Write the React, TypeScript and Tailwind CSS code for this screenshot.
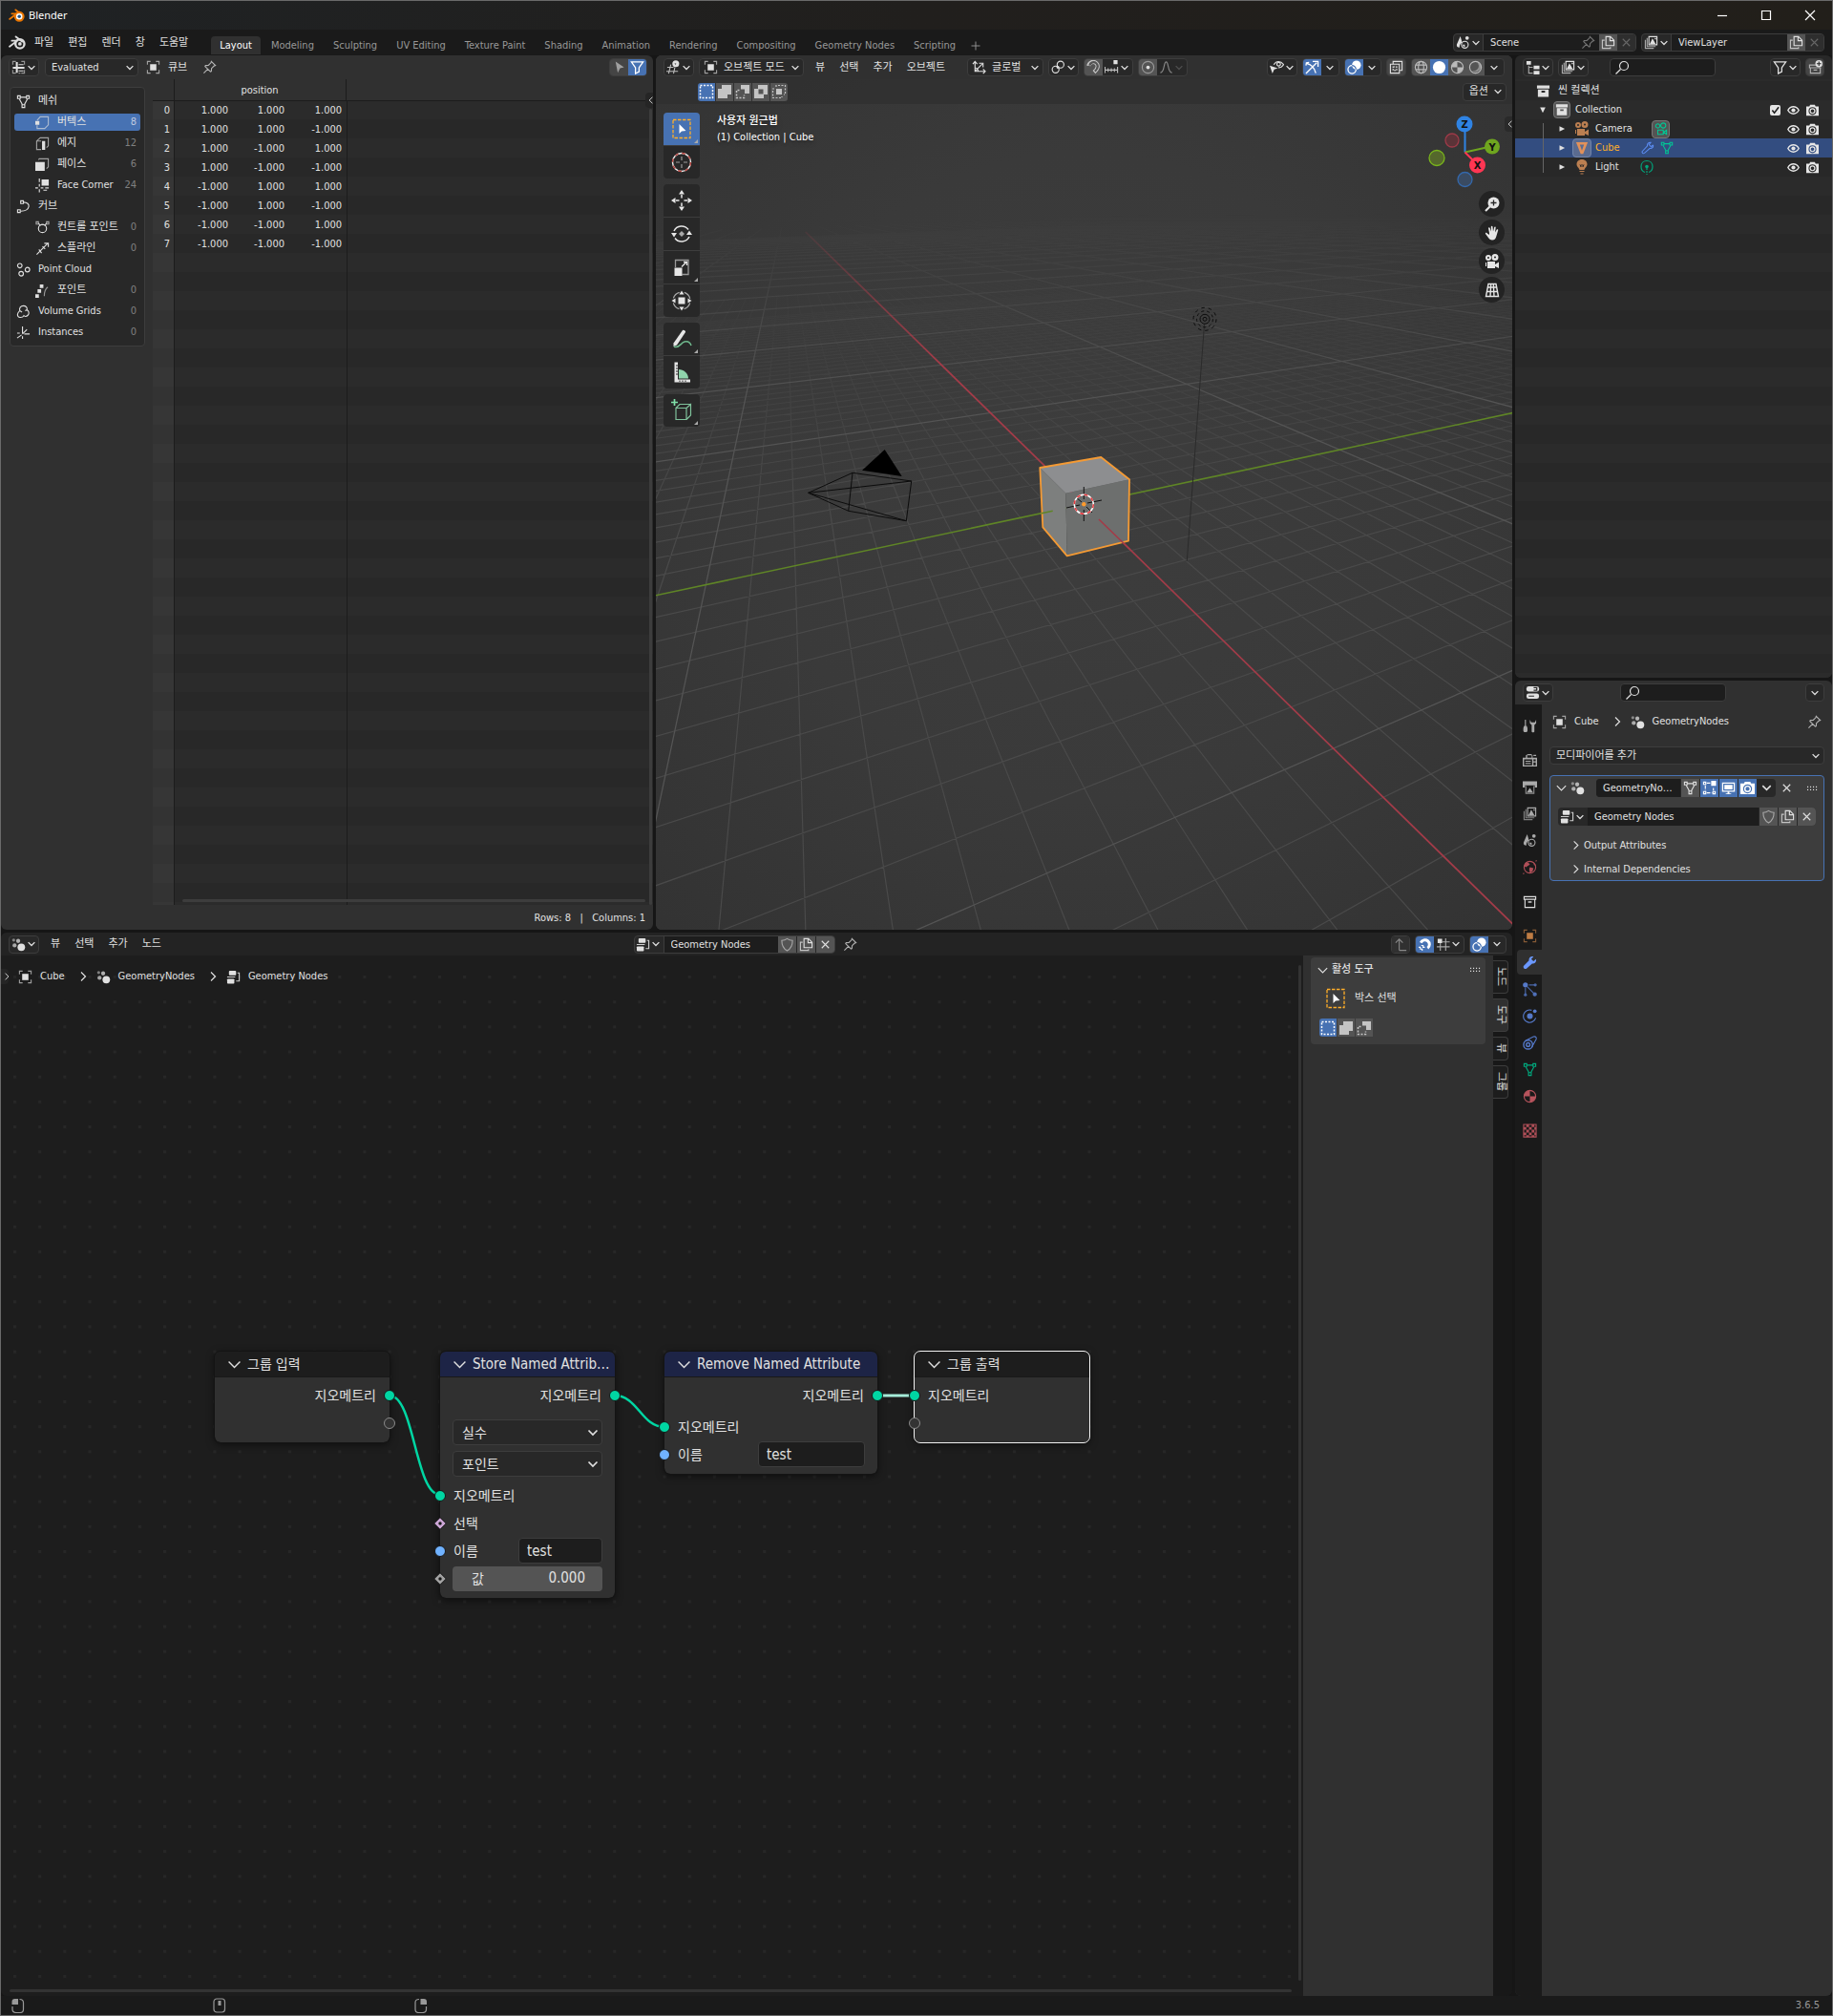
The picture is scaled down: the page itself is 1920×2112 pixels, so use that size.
import type { ReactNode } from "react";
import clsx from "clsx";

const S = { fill: "none", stroke: "currentColor", strokeWidth: 1.2 } as const;
const F = { fill: "currentColor", stroke: "none" } as const;

// All glyphs are drawn on a 16x16 grid
const ICONS: Record<string, ReactNode> = {
  down: <path {...S} strokeWidth={1.7} d="M3.500 5.500 8 10l4.500-4.500" />,
  downBig: <path {...S} d="M3 5.500 8 10.500l5-5" />,
  right: <path {...S} d="M6 3.500 10.500 8 6 12.500" />,
  left: <path {...S} d="M10 3.500 5.500 8l4.500 4.500" />,
  triDown: <path {...F} d="M3.500 4h9L8 13z" />,
  triRight: <path {...F} d="M4 3.500v9L13 8z" />,
  x: <path {...S} d="m4 4 8 8M12 4l-8 8" />,
  plus: <path {...S} d="M8 2v12M2 8h12" />,
  spreadsheet: (
    <>
      <path {...S} opacity={0.6} d="M1.500 5V1.500H5M11 1.500h3.500V5M14.500 11v3.500H11M5 14.500H1.500V11M8 14.500h2" />
      <path {...S} strokeWidth={2.2} d="M6 2v12M1.500 8.500h13" />
      <path {...S} d="M8 5h5.500M8 12h5.500" />
    </>
  ),
  object: (
    <>
      <path {...F} d="M4.500 4.500h7v7h-7z" />
      <path {...S} opacity={0.65} d="M1.500 5V1.500H5M11 1.500h3.500V5M14.500 11v3.500H11M5 14.500H1.500V11" />
    </>
  ),
  pin: <path {...S} opacity={0.75} d="M1.500 14.500 6 10M10 1.500 14.500 6l-1.500.5-2.800 2.800-.2 3.200-1 .5-6-6 .5-1 3.200-.2L9.500 3z" />,
  cursor: <path {...F} d="M4 1.500 13.500 8 9 9l-2.500 5z" />,
  filter: <path {...S} strokeWidth={1.4} d="M1.500 2h13L10 8.500V13l-4 2V8.500z" />,
  mesh: (
    <>
      <path {...S} d="M4.500 3h7M3.500 5l3.500 6.500M12.500 5 9 11.500" />
      <path {...S} d="M1.500 1.500h3v3h-3zM11.500 1.500h3v3h-3zM6.500 11.500h3v3h-3z" />
    </>
  ),
  vertex: (
    <>
      <path {...S} opacity={0.65} d="M2 5.500 5.500 1.500h9v9l-4 4H2V11" />
      <path {...F} d="M0 6h4.500v4.500H0z" />
    </>
  ),
  edge: (
    <>
      <path {...S} opacity={0.65} d="M6.500 14.500H1.500V5l4-3.500h9v9l-2 2M1.500 5h5" />
      <path {...F} d="M7.500 5h3.500v10H7.500z" />
    </>
  ),
  face: (
    <>
      <path {...F} d="M0 5h10.500v10H0z" />
      <path {...S} opacity={0.65} d="m3.500 2.500 1-1h10v9l-2 2" />
    </>
  ),
  corner: (
    <>
      <path {...F} d="M7 1h8v7H7z" />
      <path {...S} d="M4.500 0v4M4.500 6v3M4.500 12v3.500M0 10.500h3M6 10.500h3M11 10.500h4M9 13h4" />
    </>
  ),
  curve: (
    <>
      <path {...S} d="M8 3c9 0 8 10-3 10" />
      <path {...S} d="M5 1.500h3v3H5zM1.500 11.500h3v3h-3z" />
    </>
  ),
  ctrlPoint: (
    <>
      <circle {...S} cx={8} cy={9} r={4.5} />
      <path {...S} d="M3.500 3.500 6 5.500M12.500 3.500 10 5.500M6.500 4.500h3" />
      <path {...S} opacity={0.7} d="M1 1.500h2.500V4H1zM12.500 1.500H15V4h-2.500z" />
    </>
  ),
  spline: <path {...S} d="M1.500 14.500 14 2M10 2h4.500v4M4 9l3 4M8 5.500l3 3" />,
  pointCloud: (
    <>
      <circle {...S} cx={4} cy={3.5} r={2.5} />
      <circle {...S} cx={12.500} cy={8} r={2.5} />
      <circle {...S} cx={5.500} cy={12.5} r={2.5} />
    </>
  ),
  points: (
    <>
      <path {...F} d="M5 1h4v4H5zM2.500 6.500h4v4h-4zM0 12h4v4H0z" />
      <path {...S} opacity={0.6} d="M14 4c-3 2-4 5-4 10" />
    </>
  ),
  volume: <path {...S} d="M4 7c-1-3 1-5.500 4-5.500s4.500 2 4 4.500c2 1 3 4 1 6s-4 1-4.500.5C7 15 1 15.500 1.500 11c.2-2 1.500-3 2.500-4zM4 7l2.500 1.500M12 6l-2 1" />,
  instances: <path {...S} d="M7 1v8M9 9.500h6M6 10.500l-5 3.500M7 9.500l5-5M1 8.500h3M7 12v3" />,
  view3d: (
    <>
      <path {...S} opacity={0.8} d="M5 5 2.500 15M9.500 8 8 15M1 8h7M0 12.500h13" />
      <circle {...F} cx={10.500} cy={4} r={3.8} />
      <path fill="#282828" d="M9 3.500h2l-.8 2z" opacity={0.7} />
    </>
  ),
  axes: <path {...S} d="M3.500 2v10.500H15M1 4.500 3.500 1.500 6 4.500M12.500 10l2.500 2.500L12.500 15M3.500 12.500l8-8M8 3.500h4.500V8M7 12.500a4 4 0 0 0-3.500-4" />,
  pivot: (
    <>
      <circle {...S} cx={10.500} cy={5} r={3.8} />
      <circle {...S} cx={5} cy={10.500} r={3.8} />
      <circle {...F} cx={7.500} cy={8} r={1.5} />
    </>
  ),
  magnet: (
    <>
      <path {...S} strokeWidth={4.5} opacity={0.8} d="M2.500 6.500a5 5 0 0 1 8.500-3c2.500 2.500 2 6-2.500 10" />
      <path fill="none" stroke="#545454" strokeWidth={2.400} d="M3.500 6a4.500 4.500 0 0 1 7.500-2.500c2.500 2.500 2 5.500-1.500 9" />
    </>
  ),
  magnetFill: (
    <>
      <path {...S} strokeWidth={3.2} d="M3.500 6a5 5 0 1 1 7.500 6" />
      <path {...S} d="M1 11h2v2h2v2M4 9h2v2h2" />
    </>
  ),
  increment: (
    <>
      <path {...S} opacity={0.8} d="M.5 7.500v7M4 9v4M7.500 9v4M11 9v4M14.500 7.500v7M1 11h13" />
      <path {...F} d="M10 0h4.500v4.500H10z" />
    </>
  ),
  grid: (
    <>
      <path {...S} opacity={0.7} d="M5 6v9M11 1v14M7 5h8.500M1 10.500h14.500" />
      <path {...F} d="M2 1.500h5v5H2z" />
    </>
  ),
  proportional: (
    <>
      <circle {...S} opacity={0.5} cx={8} cy={8} r={6.5} />
      <circle {...F} cx={8} cy={8} r={2} />
    </>
  ),
  falloff: <path {...S} d="M1.500 14c5 0 3.500-12 6.500-12s1.500 12 6.500 12" />,
  visibility: (
    <>
      <path {...F} d="m0 6 9 3-4 1.500L3 15z" />
      <path {...S} d="M4.500 5C7.500.5 12 .5 15.500 5c-2 3-4 3.500-6 3.500" />
      <circle {...S} cx={10} cy={4.500} r={2} />
    </>
  ),
  gizmo: <path {...S} strokeWidth={1.4} d="M1 15 13 3M8.500 1.500h6v6M1.500 3.500c5 1 9 4.500 10.500 11M1 6l.5-3 3-.5" />,
  overlay: (
    <>
      <circle {...F} cx={10.500} cy={5.500} r={5} />
      <circle {...S} strokeWidth={1.4} cx={5.500} cy={10.500} r={4.5} />
      <path d="M5.500 6a4.500 4.500 0 0 1 4.500 4.500" fill="none" stroke="#4772b3" strokeWidth={1.3} />
    </>
  ),
  xray: (
    <>
      <path {...S} d="M4.500 4.500V1.500h10v10h-3M1.500 4.500h10v10h-10z" />
      <path {...S} strokeDasharray="2 1" d="M4.500 7.500h4v4h-4z" />
    </>
  ),
  wire: (
    <>
      <circle {...S} cx={8} cy={8} r={6.5} />
      <ellipse {...S} cx={8} cy={8} rx={3} ry={6.5} />
      <path {...S} d="M2 5.500h12M2 10.500h12" />
    </>
  ),
  solid: <circle {...F} cx={8} cy={8} r={7} />,
  material: (
    <>
      <circle {...S} cx={8} cy={8} r={6.5} />
      <path {...F} d="M8 1.500A6.500 6.500 0 0 0 1.500 8H8zM8 8v6.500A6.500 6.500 0 0 0 14.500 8z" />
    </>
  ),
  rendered: (
    <>
      <circle {...S} cx={8} cy={8} r={6.5} />
      <path {...F} opacity={0.6} d="M10 3c4 4 0 10-6 9 6 4 13-3 9-8z" />
    </>
  ),
  scene: (
    <>
      <path {...F} d="M5 1 1 10c-.5 2.500 1 3.500 3 3.500 0-3 1-4.500 3-5.500z" />
      <circle {...S} cx={10} cy={10.500} r={3.8} />
      <circle {...F} cx={12.500} cy={3} r={2} />
      <path {...F} d="M7.500 10.500a2.500 2.500 0 0 0 2.500 2.500v-2.500z" />
    </>
  ),
  viewLayer: (
    <>
      <path {...S} opacity={0.7} d="M1.500 5v9.500H11M3.500 3v9.500H13" />
      <path {...S} d="M5.500 1.500h9v9h-9z" />
      <path {...F} d="m6.500 9.500 3-6 3.500 6zM12 3h1.500v1.500H12z" />
    </>
  ),
  copy: (
    <>
      <path {...S} opacity={0.8} d="M4 5.500H1.500v9h9V13" />
      <path {...S} d="M5.500 1.500h5l4 4v6h-9zM10 2v4h4" />
    </>
  ),
  outliner: (
    <>
      <path {...F} d="M1 1h5v4H1zM9 6h6.500v4H9zM9 12h6.500v4H9z" />
      <path {...S} opacity={0.7} d="M3.500 6v8.500H8M4 8h4" />
    </>
  ),
  search: (
    <>
      <circle {...S} cx={10} cy={6} r={4.5} />
      <path {...S} d="m6.500 9.500-5 5" />
    </>
  ),
  collection: (
    <>
      <path {...F} d="M1 1.500h14v3.500H1z" />
      <path {...F} fillRule="evenodd" d="M2 6h12v8.500H2zm4 1.500v2h4v-2z" />
    </>
  ),
  collectionLine: (
    <>
      <path {...S} d="M1.500 2.500h13v3h-13zM2.500 5.500h11v9h-11z" />
      <path {...S} strokeWidth={1.5} d="M6 8.500h4" />
    </>
  ),
  newCollection: (
    <>
      <path {...S} opacity={0.7} d="M9 5.500H1.500v3h13M2.500 8.500v6h11v-6M6 11h4" />
      <circle {...F} cx={12} cy={4} r={4} />
      <path stroke="#282828" strokeWidth={1.2} d="M12 1.500v5M9.500 4h5" />
    </>
  ),
  camera: (
    <>
      <path {...F} fillRule="evenodd" d="M4 1a3 3 0 1 0 0 6 3 3 0 0 0 0-6m0 2a1 1 0 1 1 0 2 1 1 0 0 1 0-2M11 0a3.500 3.500 0 1 0 0 7 3.500 3.500 0 0 0 0-7m0 2.500a1 1 0 1 1 0 2 1 1 0 0 1 0-2" />
      <path {...F} d="M3 8h8v3l4-2.500v6.500l-4-2v2H3zM1 9h1v4H1z" />
    </>
  ),
  cameraLine: (
    <>
      <circle {...S} cx={4} cy={4.500} r={2.5} />
      <circle {...S} cx={10.500} cy={4} r={3} />
      <path {...S} d="M4 9.500h6.500v5H4zM11 12l3.500-2.500v5z" />
    </>
  ),
  meshFill: <path {...F} fillRule="evenodd" d="M1 1h14L9.500 15h-3zm4.500 3L8 11l2.500-7z" />,
  light: (
    <>
      <path {...F} fillRule="evenodd" d="M8 0C4.500 0 2.500 2.500 2.500 5c0 3 2.500 3.500 3 6h5c.5-2.500 3-3 3-6 0-2.500-2-5-5.500-5M5.500 5l1 3h1V6h1v2h1l1-3-1.500 1L8 5 7 6z" />
      <path {...S} d="M5.500 12.500h5M6.500 15h3" />
    </>
  ),
  lightData: (
    <>
      <path {...S} d="M6 13.500C3 12.500 2 10 2 7.500 2 4 4.500 1.500 8 1.500S14 4 14 7.500c0 2.500-1 5-4 6" />
      <circle {...F} cx={8} cy={7.500} r={1.8} />
      <path {...S} d="M8 9v7" strokeDasharray="2 1" />
    </>
  ),
  wrench: <path {...F} d="M14.800 4 12 6.500 9.500 4 12 1.200C9 .2 6.500 2.500 7 5.500L1.200 11.500c-1.500 2 1 4.500 3 3.200L10.500 9c3 .5 5.300-2 4.300-5" />,
  wrenchLine: <path {...S} d="M14.300 4.500 12 6.500 9.500 4l2-2.500C9 1 7 3 7.500 5.500L1.500 12c-1 1.500 1 3.200 2.500 2.200L10.500 8.500c2.500.5 4.500-1.500 3.800-4" />,
  eye: (
    <>
      <path {...S} strokeWidth={1.8} d="M1 8c3.500-6 10.500-6 14 0-3.500 6-10.500 6-14 0z" />
      <circle {...F} cx={8} cy={8} r={2.6} />
    </>
  ),
  photo: (
    <>
      <path {...F} fillRule="evenodd" d="M0 3h4l1-2h6l1 2h4v12H0zm8 1a5 5 0 1 0 0 10A5 5 0 0 0 8 4" />
      <circle {...S} strokeWidth={1.5} cx={8} cy={9} r={3} />
    </>
  ),
  properties: (
    <>
      <rect {...F} x={1} y={1} width={14} height={6} rx={2.5} />
      <rect {...F} x={1} y={9} width={14} height={6} rx={2.5} />
      <path fill="none" stroke="#282828" strokeWidth={1.3} d="M9 2.500h3.500v3H9M3.500 12h6" />
    </>
  ),
  geoNodes: (
    <>
      <circle {...F} cx={11} cy={11} r={4.2} />
      <circle {...F} opacity={0.75} cx={7.500} cy={4} r={2.3} />
      <circle {...F} opacity={0.7} cx={3.500} cy={9} r={2.3} />
      <circle {...F} opacity={0.5} cx={2.500} cy={3} r={1.7} />
    </>
  ),
  nodeTree: (
    <>
      <rect {...F} x={3} y={1} width={8} height={5} rx={1} />
      <rect {...F} x={1} y={10} width={8} height={5.5} rx={1} />
      <path {...S} opacity={0.9} d="M1 8h9M12.500 3.500h2v9H11" />
    </>
  ),
  shield: <path {...S} opacity={0.6} d="M8 1.500C6 3 4 3.500 2 3.500c0 5 1.500 9 6 11.500 4.500-2.500 6-6.500 6-11.500-2 0-4-.5-6-2z" />,
  editMode: (
    <>
      <path {...S} strokeDasharray="4 1.500" d="M3.500 5v6M5 13.500h6M12.500 8v3M5 2.500h4" />
      <path {...S} d="M1.500 1.500h2.500v2.500H1.500zM1.500 12h2.500v2.500H1.500zM12 12h2.500v2.500H12z" />
      <path {...F} d="M10 0h5.500v5.500H10z" />
    </>
  ),
  monitor: (
    <>
      <path {...S} strokeWidth={1.4} d="M1.500 2.500h13v9h-13z" />
      <path {...F} d="M3.500 4.500h9v5h-9zM7 12h2v2h2v1H5v-1h2z" />
    </>
  ),
  grip: <path {...F} d="M0 5h1.500v1.500H0zM4 5h1.500v1.500H4zM8 5h1.500v1.500H8zM12 5h1.500v1.500H12zM0 9h1.500v1.500H0zM4 9h1.500v1.500H4zM8 9h1.500v1.500H8zM12 9h1.500v1.500H12z" />,
  tool: (
    <>
      <path {...S} d="M3 1v8" />
      <path {...F} d="M1.500 8h3l.8 2.500v3L4.500 15h-3l-.8-1.500v-3zM8 1v4l2 2v7.500c0 1 3 1 3 0V7l2-2V1l-1.500 3h-4z" />
    </>
  ),
  render: (
    <>
      <path {...F} fillRule="evenodd" d="M0 5h3.500V2.500L6 1h3.500L11 2.500V5h5v10H0zm1.500 2v6.500h9V7zm10.500 0v2h2.500V7zm0 3.500v3h2.500v-3zM5 2.500V5h5V2.500z" />
      <path {...S} d="M3 9h6M3 11.500h6M12 2.500h3" />
    </>
  ),
  output: (
    <>
      <path {...F} d="M0 1.500h16v7h-2.500V6h-11v2.500H0z" />
      <path {...S} opacity={0.8} d="M3.500 7v8h9V7" />
      <path {...F} d="m4.500 14 3.500-5 3.500 5z" />
    </>
  ),
  world: (
    <>
      <circle {...S} cx={8} cy={8} r={6.5} />
      <path {...F} d="M3 3c3-1 4 1 5 1.500-1 2-3 1.500-4 3.500L1.500 7zM8 8l4 1-1 3.500-3 2C8 12 6.500 11 8 8zM12 2l3 4-2.500-.5zM13 1.500 15.500.5" />
      <path {...S} d="m1.500 14.500-1 1M14.500 1.500l1-1" />
    </>
  ),
  particles: (
    <>
      <circle {...F} cx={3} cy={3} r={2.8} />
      <path {...S} opacity={0.8} d="M3 6v7M7 3h6M5 5l7 7" />
      <circle {...F} opacity={0.8} cx={14} cy={3} r={1.7} />
      <circle {...F} opacity={0.8} cx={3} cy={14} r={1.7} />
      <circle {...F} opacity={0.9} cx={13.500} cy={13.500} r={2.3} />
    </>
  ),
  physics: (
    <>
      <circle {...F} cx={8} cy={8} r={3.2} />
      <path {...S} d="M10 1.500A7 7 0 1 0 14.500 10" />
      <circle {...F} cx={13.500} cy={2.500} r={2} />
    </>
  ),
  constraints: (
    <>
      <circle {...S} strokeWidth={1.5} cx={6} cy={10} r={5} />
      <circle {...S} strokeWidth={1.5} cx={6} cy={10} r={2} />
      <path {...S} d="M3 5.500 12 1c3-.5 3.500 1.500 3 3l-5 9" />
    </>
  ),
  texture: (
    <>
      <path {...S} d="M1 1h14v14H1z" />
      <path {...F} d="M4 1h3v3H4zM10 1h3v3h-3zM1 4h3v3H1zM7 4h3v3H7zM13 4h2v3h-2zM4 7h3v3H4zM10 7h3v3h-3zM1 10h3v3H1zM7 10h3v3H7zM13 10h2v3h-2zM4 13h3v2H4zM10 13h3v2h-3z" />
    </>
  ),
  up: <path {...S} opacity={0.5} d="M6 14.500h8M6 14.500v-12M2 6l4-4 4 4" />,
  boxSet: <path fill="none" stroke="#fff" strokeWidth={1.5} strokeDasharray="2 1.500" d="M1.500 1.500h13v13h-13z" />,
  boxAdd: <path {...F} d="M5 1h10v10h-4v4H1V5h4z" />,
  boxSub: (
    <>
      <path {...F} d="M6 1h9v9h-5V5.500H6z" />
      <path {...S} strokeWidth={1.5} strokeDasharray="2 1.500" d="M4.500 6.500h-3v8h8v-3" />
    </>
  ),
  boxXor: <path {...F} fillRule="evenodd" d="M5 1h10v10h-4v4H1V5h4zm.5 4.500v5h5v-5z" />,
  boxAnd: (
    <>
      <path {...F} d="M5 5h6v6H5z" />
      <path {...S} strokeDasharray="2 1.500" d="M5 3V1.500h9.500V11H13M3 5H1.500v9.500H11V13" />
    </>
  ),
  mouseL: (
    <>
      <path {...F} d="M1.500 7V4a3 3 0 0 1 3-3H8v6z" />
      <path {...S} d="M9.500 1.500c3 0 4 1 4 3.500v7c0 2-1.500 3.500-3.500 3.500H6c-2.500 0-4-1.500-4-3.500V9" />
    </>
  ),
  mouseM: (
    <>
      <rect {...S} x={2} y={1} width={11.5} height={14} rx={3} />
      <path {...F} d="M6.500 3h3v5h-3z" />
    </>
  ),
  mouseR: (
    <>
      <path {...F} d="M14 7V4a3 3 0 0 0-3-3H7.500v6z" />
      <path {...S} d="M6 1.500c-3 0-4 1-4 3.500v7c0 2 1.500 3.500 3.500 3.500h4c2.500 0 4-1.500 4-3.500V9" />
    </>
  ),
  zoom: (
    <>
      <circle {...F} cx={9.500} cy={6.500} r={6} />
      <path {...S} strokeWidth={2.2} d="m5.500 10.500-4.500 4.500" />
      <path stroke="#282828" strokeWidth={1.3} d="M9.500 3.500v6M6.500 6.500h6" />
    </>
  ),
  hand: <path {...F} d="M5 8 4 3c0-1 1.500-1 1.700 0L7 6.500 6.800 1.500c.2-1 1.700-1 1.700 0l.5 5 1.200-4.500c.3-1 1.600-.7 1.500.3L11 7.500l1.800-3c.6-.8 1.700-.2 1.400.8L12.500 11c-.7 3-2 4.500-4.500 4.500-2 0-3-1-4-2.500L1 9c-.4-1 .8-1.500 1.500-.8L5 10z" />,
  persp: <path {...S} strokeWidth={1.4} d="M4 1.500h8l2.500 13h-13zM3.300 5h9.400M2.500 9.500h11M6.700 1.500 6 14.500M9.300 1.500l.7 13" />,
  winMin: <path {...S} stroke="#fff" d="M3 8.500h10" />,
  winMax: <path {...S} stroke="#fff" d="M3.500 3.500h9v9h-9z" />,
  winClose: <path {...S} stroke="#fff" d="m3 3 10 10M13 3 3 13" />,
};

function Icon({ name, className = "size-4" }: { name: string; className?: string }) {
  return (
    <svg viewBox="0 0 16 16" aria-hidden="true" className={clsx("shrink-0", className)}>
      {ICONS[name]}
    </svg>
  );
}

function BlenderLogo({ mono = false, className }: { mono?: boolean; className: string }) {
  const main = mono ? "#dcdcdc" : "#ea7600";
  return (
    <svg viewBox="0 0 20 16" aria-hidden="true" className={clsx("shrink-0", className)}>
      <path d="M1 12.500 9.500 6H3.500M8 1.500 15 7" fill="none" stroke={main} strokeWidth={2} strokeLinecap="round" strokeLinejoin="round" />
      <circle cx={12.5} cy={9.5} r={5} fill={mono ? "none" : "#fff"} stroke={main} strokeWidth={2.5} />
      <circle cx={12.5} cy={9.5} r={2} fill={mono ? main : "#265787"} />
    </svg>
  );
}

/* ---------- shared controls ---------- */

const BOX = "flex h-[19px] items-center overflow-hidden rounded-[4px] border border-[#3d3d3d] bg-[#282828]";

function MenuButton({ icon, label }: { icon: string; label: string }) {
  return (
    <button aria-label={label} className={clsx(BOX, "w-8 justify-center")}>
      <Icon name={icon} className="size-[15px]" />
      <Icon name="down" className="size-3" />
    </button>
  );
}

function Cell({ icon, label, className }: { icon: string; label: string; className?: string }) {
  return (
    <button aria-label={label} className={clsx("flex h-full w-[19px] shrink-0 items-center justify-center", className)}>
      <Icon name={icon} className="size-[15px]" />
    </button>
  );
}

function Dropdown({ label, value, icon, className }: { label: string; value: string; icon?: string; className?: string }) {
  return (
    <div className={clsx(BOX, "pr-0.5", className)}>
      {icon && <Icon name={icon} className="mr-1 ml-1 size-[15px]" />}
      <select aria-label={label} className={clsx("min-w-0 flex-1 appearance-none bg-transparent outline-none", icon ? "pl-0.5" : "pl-1.5")}>
        <option>{value}</option>
      </select>
      <Icon name="down" className="size-3" />
    </div>
  );
}

function SearchBox({ label, className }: { label: string; className?: string }) {
  return (
    <label className={clsx("flex h-[19px] items-center gap-1 rounded-[4px] border border-[#3d3d3d] bg-[#1d1d1d] px-1", className)}>
      <Icon name="search" className="size-4" />
      <input type="search" aria-label={label} className="w-full min-w-0 bg-transparent outline-none" />
    </label>
  );
}

function Crumbs({ items }: { items: { icon: string; text: string }[] }) {
  return (
    <nav className="flex items-center">
      {items.map((it, i) => (
        <a key={it.text} href="#" className="flex items-center">
          {i > 0 && <Icon name="right" className="mr-1.5 ml-[11px] size-4" />}
          <Icon name={it.icon} className="mr-2 size-[15px]" />
          {it.text}
        </a>
      ))}
    </nav>
  );
}

/* ---------- top ---------- */

const WORKSPACES = ["Layout", "Modeling", "Sculpting", "UV Editing", "Texture Paint", "Shading", "Animation", "Rendering", "Compositing", "Geometry Nodes", "Scripting"];

function TitleBar() {
  return (
    <div className="flex h-[30px] shrink-0 items-center bg-linear-to-r from-[#1f2224] via-[#211f1d] to-[#221f1a] pl-2 text-white">
      <BlenderLogo className="h-[14px] w-[18px]" />
      <h1 className="ml-[3px] flex-1 font-['Noto_Sans','Liberation_Sans',sans-serif] text-[11px]">Blender</h1>
      {["winMin", "winMax", "winClose"].map((n) => (
        <button key={n} aria-label={n.slice(3)} className="flex h-full w-[46px] items-center justify-center">
          <Icon name={n} />
        </button>
      ))}
    </div>
  );
}

function DataBlock({ icon, name, pin }: { icon: string; name: string; pin?: boolean }) {
  return (
    <div className={clsx(BOX, "w-48")}>
      <button aria-label={`Browse ${name}`} className="flex h-full w-[30px] items-center justify-center">
        <Icon name={icon} className="size-[15px]" />
        <Icon name="down" className="size-3" />
      </button>
      <div className="flex h-full min-w-0 flex-1 items-center border-l border-[#3d3d3d] bg-[#1d1d1d] pr-1">
        <input aria-label={name} defaultValue={name} className="min-w-0 flex-1 bg-transparent pl-[7px] outline-none" />
        {pin && <Icon name="pin" className="size-[15px] opacity-60" />}
      </div>
      <Cell icon="copy" label="New" className="bg-[#545454]" />
      <Cell icon="x" label="Remove" className="bg-[#2e2e2e] text-[#666]" />
    </div>
  );
}

function TopBar() {
  return (
    <header className="flex h-[27px] shrink-0 items-center bg-[#1a1a1a]">
      <BlenderLogo mono className="ml-[8px] h-[15px] w-[19px]" />
      <nav className="ml-2 flex gap-[15px] pt-px">
        {["파일", "편집", "렌더", "창", "도움말"].map((m) => (
          <button key={m}>{m}</button>
        ))}
      </nav>
      <div className="ml-6 flex gap-0.5 self-end pb-px text-[#989898]">
        {WORKSPACES.map((w, i) => (
          <button key={w} className={clsx("h-[19px] rounded-t-[4px] px-[9px]", i === 0 && "bg-[#303030] text-white")}>
            {w}
          </button>
        ))}
        <button aria-label="Add workspace" className="px-1">
          <Icon name="plus" className="size-3" />
        </button>
      </div>
      <div className="mr-2 ml-auto flex gap-[5px]">
        <DataBlock icon="scene" name="Scene" pin />
        <DataBlock icon="viewLayer" name="ViewLayer" />
      </div>
    </header>
  );
}

/* ---------- spreadsheet ---------- */

const DOMAINS = [
  { icon: "mesh", text: "메쉬" },
  { icon: "vertex", text: "버텍스", count: 8, sub: true, active: true },
  { icon: "edge", text: "에지", count: 12, sub: true },
  { icon: "face", text: "페이스", count: 6, sub: true },
  { icon: "corner", text: "Face Corner", count: 24, sub: true },
  { icon: "curve", text: "커브" },
  { icon: "ctrlPoint", text: "컨트롤 포인트", count: 0, sub: true },
  { icon: "spline", text: "스플라인", count: 0, sub: true },
  { icon: "pointCloud", text: "Point Cloud" },
  { icon: "points", text: "포인트", count: 0, sub: true },
  { icon: "volume", text: "Volume Grids", count: 0 },
  { icon: "instances", text: "Instances", count: 0 },
];

const ROWS = [
  [1, 1, 1],
  [1, 1, -1],
  [1, -1, 1],
  [1, -1, -1],
  [-1, 1, 1],
  [-1, 1, -1],
  [-1, -1, 1],
  [-1, -1, -1],
];

function Spreadsheet() {
  return (
    <section aria-label="Spreadsheet" className="flex min-h-0 flex-col overflow-hidden rounded-md bg-[#303030]">
      <div className="flex h-[25px] shrink-0 items-center pr-[6px] pl-2">
        <MenuButton icon="spreadsheet" label="Editor type" />
        <Dropdown label="Evaluation state" value="Evaluated" className="ml-[6px] w-[98px]" />
        <Icon name="object" className="ml-2 size-[15px]" />
        <span className="ml-2">큐브</span>
        <Icon name="pin" className="ml-4 size-[15px]" />
        <div className="ml-auto flex h-[19px] overflow-hidden rounded-[4px] border border-[#3d3d3d]">
          <Cell icon="cursor" label="Selected only" className="bg-[#454545] text-[#a0a0a0]" />
          <Cell icon="filter" label="Filter" className="bg-[#4772b3] text-white" />
        </div>
      </div>
      <div className="flex min-h-0 flex-1">
        <div className="w-[159px] shrink-0 px-[9px] pt-2">
          <ul className="w-[142px] rounded-[4px] border border-[#3d3d3d] bg-[#282828] px-1 py-[3px]">
            {DOMAINS.map((d) => (
              <li key={d.text} className="py-0.5">
                <button
                  className={clsx(
                    "flex h-[18px] w-full items-center gap-2 rounded-[3px] pr-1",
                    d.sub ? "pl-[22px]" : "pl-0.5",
                    d.active && "bg-[#4772b3]",
                  )}
                >
                  <Icon name={d.icon} className="size-[15px]" />
                  <span className="whitespace-nowrap">{d.text}</span>
                  {d.count !== undefined && <span className={clsx("ml-auto", d.active ? "text-[#c0cbe0]" : "text-[#808080]")}>{d.count}</span>}
                </button>
              </li>
            ))}
          </ul>
        </div>
        <div className="relative flex min-w-0 flex-1 flex-col">
          <div className="relative min-h-0 flex-1 bg-[repeating-linear-gradient(#2b2b2b_0_20px,#282828_20px_40px)] bg-position-[0_22px]">
            <div className="h-full w-[204px] border-r border-[#1c1c1c]">
              <div className="h-full w-[23px] border-r border-[#1c1c1c] bg-white/5"></div>
            </div>
            <table className="absolute inset-x-0 top-0 w-full table-fixed border-collapse text-right">
              <colgroup>
                <col className="w-[22px]" />
                <col className="w-[61px]" />
                <col className="w-[59px]" />
                <col className="w-[60px]" />
                <col />
              </colgroup>
              <thead>
                <tr className="h-[22px] border-b border-[#1c1c1c] bg-[#303030]">
                  <th></th>
                  <th colSpan={3} className="border-x border-[#1c1c1c] pt-0.5 text-center font-normal">
                    position
                  </th>
                  <th></th>
                </tr>
              </thead>
              <tbody>
                {ROWS.map((r, i) => (
                  <tr key={i} className="h-5">
                    <td className="pr-1 leading-5">{i}</td>
                    {r.map((v, j) => (
                      <td key={j} className="pr-1 leading-5">
                        {v.toFixed(3)}
                      </td>
                    ))}
                    <td></td>
                  </tr>
                ))}
              </tbody>
            </table>
            <div className="absolute top-[31px] right-[1px] bottom-0 w-[3px] rounded bg-[#3d3d3d]"></div>
            <div className="absolute right-2 bottom-[3px] left-[31px] h-[3px] rounded bg-[#3d3d3d]"></div>
            <div className="absolute top-[14px] right-0 flex h-4 w-2 items-center rounded-l bg-[#252525]">
              <Icon name="left" className="size-3" />
            </div>
          </div>
          <p className="h-[26px] shrink-0 pr-2 text-right leading-[27px] whitespace-pre">Rows: 8   |   Columns: 1</p>
        </div>
      </div>
    </section>
  );
}

/* ---------- 3D viewport ---------- */

// Floor plane -> view plane
const project = (x: number, y: number) => {
  const w = 1 - 0.0455 * x + 0.01926 * y;
  return [1135.3 + (14.24 * x + 31.97 * y) / w, 528.3 + (13.94 * x - 6.81 * y) / w];
};

const segment = (a: number[], b: number[]) => `M${a[0].toFixed(1)} ${a[1].toFixed(1)}L${b[0].toFixed(1)} ${b[1].toFixed(1)}`;

const floorLines = (step: number, count: number, far: number) => {
  let d = "";
  for (let i = -count; i <= count; i++) {
    const k = i * step;
    if (k === 0 || (step === 1 && k % 10 === 0)) continue;
    const yMin = Math.max(-far, (0.0455 * k - 0.85) / 0.01926);
    if (yMin < far) d += segment(project(k, yMin), project(k, far));
    const xMax = Math.min(far, (0.85 + 0.01926 * k) / 0.0455);
    if (xMax > -far) d += segment(project(-far, k), project(xMax, k));
  }
  return d;
};

const FINE = floorLines(1, 45, 60);
const MAJOR = floorLines(10, 24, 400);
const X_AXIS = segment(project(-300, 0), project(18, 0));
const Y_AXIS = segment(project(0, -40), project(0, 60));

function Scene3D() {
  return (
    <svg viewBox="687 58 897 916" preserveAspectRatio="xMidYMid slice" aria-hidden="true" className="absolute inset-0 size-full">
      <defs>
        <radialGradient id="bg" cx="1135" cy="500" r="680" gradientUnits="userSpaceOnUse">
          <stop offset="0" stopColor="#3d3d3d" />
          <stop offset="0.5" stopColor="#3a3a3a" />
          <stop offset="1" stopColor="#323232" />
        </radialGradient>
        <linearGradient id="fadeFine" gradientUnits="userSpaceOnUse" x1="0" y1="255" x2="0" y2="540">
          <stop offset="0" stopColor="#000" />
          <stop offset="0.4" stopColor="#555" />
          <stop offset="1" stopColor="#fff" />
        </linearGradient>
        <linearGradient id="fadeMajor" gradientUnits="userSpaceOnUse" x1="0" y1="222" x2="0" y2="420">
          <stop offset="0" stopColor="#000" />
          <stop offset="0.3" stopColor="#404040" />
          <stop offset="1" stopColor="#fff" />
        </linearGradient>
        <linearGradient id="xAxis" gradientUnits="userSpaceOnUse" x1="0" y1="222" x2="0" y2="380">
          <stop offset="0" stopColor="#a33b48" stopOpacity="0" />
          <stop offset="1" stopColor="#a33b48" />
        </linearGradient>
        <mask id="mFine" maskUnits="userSpaceOnUse" x="687" y="58" width="897" height="916">
          <rect x="687" y="58" width="897" height="916" fill="url(#fadeFine)" />
        </mask>
        <mask id="mMajor" maskUnits="userSpaceOnUse" x="687" y="58" width="897" height="916">
          <rect x="687" y="58" width="897" height="916" fill="url(#fadeMajor)" />
        </mask>
      </defs>
      <rect x="0" y="0" width="2400" height="2400" fill="url(#bg)" />
      <path d={FINE} stroke="#4a4a4a" strokeWidth="1.2" mask="url(#mFine)" />
      <path d={MAJOR} stroke="#545454" strokeWidth="1.3" mask="url(#mMajor)" />
      <path d={X_AXIS} stroke="url(#xAxis)" strokeWidth="1.7" />
      <path d={Y_AXIS} stroke="#5f8526" strokeWidth="1.6" />

      {/* light */}
      <path d="M1261.500 340 1243.300 587.700" stroke="#2b2b2b" strokeWidth="1" />
      <g fill="none" stroke="#0c0c0c" strokeWidth="1">
        <circle cx="1262" cy="334.300" r="2" />
        <circle cx="1262" cy="334.300" r="5" />
        <circle cx="1262" cy="334.300" r="8.500" strokeDasharray="3 3" />
        <circle cx="1262" cy="334.300" r="12" strokeDasharray="3.500 4" />
      </g>

      {/* camera */}
      <path d="M926.700 471 903 492.700 944.700 499z" fill="#000" />
      <path
        d="M846.700 516.300 893 495.300 954.700 504 949.300 545.700 888.700 535.300zM846.700 516.300 954.700 504M846.700 516.300 949.300 545.700M893 495.300 888.700 535.300"
        fill="none"
        stroke="#0c0c0c"
        strokeWidth="1"
      />

      {/* cube */}
      <path d="M1089.300 490 1116.300 516.700 1117.700 582.300 1092.300 552.300z" fill="#7d7f7e" />
      <path d="M1116.300 516.700 1183 502.300 1182 566.700 1117.700 582.300z" fill="#6d6f6e" />
      <path d="M1089.300 490 1153.300 479 1183 502.300 1116.300 516.700z" fill="#8d8e90" />
      <path d="M1089.300 490 1153.300 479 1183 502.300 1182 566.700 1117.700 582.300 1092.300 552.300z" fill="none" stroke="#f49a34" strokeWidth="1.800" strokeLinejoin="round" />
      <path d="M1151 544 1184 576" stroke="#a33b48" strokeWidth="1.700" />
      <path d="M1091 537.700 1102.700 535.300" stroke="#5f8526" strokeWidth="1.600" />

      {/* 3D cursor */}
      <path d="M1135.300 510v13M1135.300 534v12M1117 532l14-3M1139 527l15-3M1127 521l6 5M1138 531l6 6" stroke="#111" strokeWidth="1" />
      <circle cx="1135.300" cy="528.300" r="10" fill="none" stroke="#fff" strokeWidth="1.500" />
      <circle cx="1135.300" cy="528.300" r="10" fill="none" stroke="#e8383d" strokeWidth="1.500" strokeDasharray="3.900 3.950" />
      <circle cx="1135.300" cy="528.300" r="2.200" fill="#ff9b2e" />
    </svg>
  );
}

const TOOL_ART: Record<string, ReactNode> = {
  select: (
    <>
      <path d="M3 2.500h18v19H3z" fill="none" stroke="#ffae29" strokeWidth="1.300" strokeDasharray="3.500 1.500" />
      <path d="M9.500 7v10l2.500-2.500 4.500-.5z" fill="#fff" />
    </>
  ),
  cursor: (
    <>
      <circle cx="12" cy="12" r="9.500" fill="none" stroke="#eee" strokeWidth="1.400" />
      <circle cx="12" cy="12" r="9.500" fill="none" stroke="#b8443f" strokeWidth="1.400" strokeDasharray="3.700 3.750" />
      <path d="M12 6v4M12 14v4M6 12h4M14 12h4" stroke="#999" strokeWidth="1.200" />
    </>
  ),
  move: (
    <>
      <path d="m12 1 3 4.500H9zM12 23l3-4.500H9zM1 12l4.500-3v6zM23 12l-4.500-3v6z" fill="#e6e6e6" />
      <path d="M12 6v3.500M12 14.500V18M6 12h3.500M14.500 12H18" stroke="#e6e6e6" strokeWidth="1.500" />
    </>
  ),
  rotate: (
    <>
      <path d="M4 9a8.800 8.800 0 0 1 15-1.500M20 15a8.800 8.800 0 0 1-15 1.500" fill="none" stroke="#e6e6e6" strokeWidth="1.500" />
      <path d="M1 11h6l-3 4.500zM23 13h-6l3-4.500z" fill="#e6e6e6" />
      <path d="m12 9 3 3-3 3-3-3z" fill="#a8a8a8" />
    </>
  ),
  scale: (
    <>
      <path d="M5.500 12V4.500H19v15h-6.500" fill="none" stroke="#999" strokeWidth="1.300" />
      <path d="M4.500 12.500h8V21h-8z" fill="#e6e6e6" />
      <path d="m12 11.500 5-5M14 6.500h3.500V10" fill="none" stroke="#e6e6e6" strokeWidth="1.300" />
    </>
  ),
  transform: (
    <>
      <circle cx="12" cy="12" r="9" fill="none" stroke="#aaa" strokeWidth="1.300" strokeDasharray="9 5.140" strokeDashoffset="-2.500" />
      <path d="M8.500 8.500h7v7h-7zM12 1.500l2.500 4h-5zM12 22.500l2.500-4h-5zM1.500 12l4-2.500v5zM22.500 12l-4-2.500v5z" fill="#e6e6e6" />
    </>
  ),
  annotate: (
    <>
      <path d="M3.500 16.500 13 3c1-1 3.500.5 3 2L7 18.500 3.500 20z" fill="#e6e6e6" />
      <path d="M4 20c5 3 7-4 11-5s6 1 7 4" fill="none" stroke="#6fb98d" strokeWidth="1.500" />
    </>
  ),
  measure: (
    <>
      <path d="M4.500 1.500h3.500v21H4.500zM4.500 19.500H21v3H4.500z" fill="#e6e6e6" />
      <path d="M9 9c5 0 10 4 10 9.500H9z" fill="#8fd3ab" />
      <path d="M8 5H6M8 8H6M8 11H6M8 14H6M10 22v-1.500M13 22v-1.500M16 22v-1.500" stroke="#282828" />
    </>
  ),
  addCube: (
    <>
      <path d="M6 9.500h11v12H6zM6 9.500l4-4h11.500M17 9.500l4.500-4V17l-4.500 4.500" fill="none" stroke="#7fc29b" strokeWidth="1.200" />
      <path d="M4.500 0v7M1 3.500h7" stroke="#7fe0a8" strokeWidth="1.700" />
    </>
  ),
};

const TOOL_GROUPS = [["select", "cursor"], ["move", "rotate", "scale", "transform"], ["annotate", "measure"], ["addCube"]];
const HAS_FLYOUT = ["select", "scale", "annotate", "addCube"];

function Toolbar() {
  return (
    <div className="flex w-[38px] flex-col gap-[6px]">
      {TOOL_GROUPS.map((g) => (
        <div key={g[0]} className="flex flex-col gap-px overflow-hidden rounded-[4px] bg-[#3d3d3d]">
          {g.map((t) => (
            <button
              key={t}
              aria-label={t}
              className={clsx("relative flex h-[34px] items-center justify-center", t === "select" ? "bg-[#4772b3]" : "bg-[#282828]")}
            >
              <svg viewBox="0 0 24 24" className="size-6">
                {TOOL_ART[t]}
              </svg>
              {HAS_FLYOUT.includes(t) && (
                <svg viewBox="0 0 4 4" className="absolute right-[2px] bottom-[2px] size-1 fill-[#aaa]">
                  <path d="M4 0v4H0z" />
                </svg>
              )}
            </button>
          ))}
        </div>
      ))}
    </div>
  );
}

function NavGizmo() {
  return (
    <svg viewBox="0 0 80 80" aria-label="Orientation" className="size-20">
      <path d="M43.500 40.500V18" stroke="#2f83e3" strokeWidth="2" />
      <path d="m43.500 40.500 27-6" stroke="#6fa51f" strokeWidth="2" />
      <path d="m43.500 40.500 12 12" stroke="#ff3653" strokeWidth="2" />
      <circle cx="30" cy="28" r="7" fill="#5b3338" stroke="#9d3a48" strokeWidth="1.300" />
      <circle cx="14" cy="46.500" r="8" fill="#55682c" stroke="#79b51c" strokeWidth="1.300" />
      <circle cx="43.500" cy="69" r="7.500" fill="#3a4b62" stroke="#3468ab" strokeWidth="1.300" />
      <circle cx="43" cy="11" r="8.500" fill="#2f83e3" />
      <circle cx="72" cy="34.500" r="8" fill="#6fa51f" />
      <circle cx="56.500" cy="54" r="8.500" fill="#ff3653" />
      <g textAnchor="middle" fill="#111" className="text-[11px] font-bold">
        <text x="43" y="15">Z</text>
        <text x="72" y="38.500">Y</text>
        <text x="56.500" y="58">X</text>
      </g>
    </svg>
  );
}

const SELECT_MODES = ["boxSet", "boxAdd", "boxSub", "boxXor", "boxAnd"];

function SelectModes({ count }: { count: number }) {
  return (
    <div className="flex h-[19px] gap-px overflow-hidden rounded-[3px]">
      {SELECT_MODES.slice(0, count).map((m, i) => (
        <button key={m} aria-label={m} className={clsx("flex w-[18px] items-center justify-center text-[#c4c4c4]", i === 0 ? "bg-[#4772b3]" : "bg-[#545454]")}>
          <Icon name={m} className="size-4" />
        </button>
      ))}
    </div>
  );
}

function ToggleMenu({ icon, label, className }: { icon: string; label: string; className?: string }) {
  return (
    <div className={clsx(BOX, "w-[39px]")}>
      <Cell icon={icon} label={label} className={clsx("bg-[#4772b3] text-white", className)} />
      <button aria-label={`${label} options`} className="flex flex-1 justify-center">
        <Icon name="down" className="size-3" />
      </button>
    </div>
  );
}

function Viewport() {
  return (
    <section aria-label="3D viewport" className="relative flex min-w-0 flex-col overflow-hidden rounded-md bg-[#393939]">
      <Scene3D />
      <div className="relative flex h-[25px] shrink-0 items-center bg-[#303030]/90 pr-2 pl-2">
        <MenuButton icon="view3d" label="Editor type" />
        <Dropdown label="Mode" icon="object" value="오브젝트 모드" className="ml-[5px] w-[110px]" />
        <nav className="ml-3 flex gap-[15px]">
          {["뷰", "선택", "추가", "오브젝트"].map((m) => (
            <button key={m}>{m}</button>
          ))}
        </nav>
        <Dropdown label="Orientation" icon="axes" value="글로벌" className="ml-[23px] w-20" />
        <div className="ml-[5px] flex gap-[5px]">
          <MenuButton icon="pivot" label="Pivot" />
          <div className={clsx(BOX, "w-[52px]")}>
            <Cell icon="magnet" label="Snap" className="bg-[#545454]" />
            <button aria-label="Snap options" className="flex flex-1 items-center justify-center">
              <Icon name="increment" className="size-[15px]" />
              <Icon name="down" className="size-3" />
            </button>
          </div>
          <div className={clsx(BOX, "w-[52px]")}>
            <Cell icon="proportional" label="Proportional" className="bg-[#545454]" />
            <button aria-label="Falloff" className="flex flex-1 items-center justify-center text-[#888]">
              <Icon name="falloff" className="size-[15px]" />
              <Icon name="down" className="size-3 opacity-40" />
            </button>
          </div>
        </div>
        <div className="ml-auto flex gap-[5px]">
          <MenuButton icon="visibility" label="Visibility" />
          <ToggleMenu icon="gizmo" label="Gizmos" />
          <ToggleMenu icon="overlay" label="Overlays" />
          <div className={clsx(BOX, "w-[21px]")}>
            <Cell icon="xray" label="X-ray" className="bg-[#454545]" />
          </div>
          <div className={clsx(BOX, "w-[98px]")}>
            <Cell icon="wire" label="Wireframe" className="bg-[#545454] text-[#bbb]" />
            <Cell icon="solid" label="Solid" className="bg-[#4772b3] text-white" />
            <Cell icon="material" label="Material" className="bg-[#545454] text-[#bbb]" />
            <Cell icon="rendered" label="Rendered" className="bg-[#545454] text-[#bbb]" />
            <button aria-label="Shading options" className="flex flex-1 justify-center">
              <Icon name="down" className="size-3" />
            </button>
          </div>
        </div>
      </div>
      <div className="relative flex h-[26px] shrink-0 items-center justify-between bg-[#303030]/80 pr-[6px] pl-[44px]">
        <SelectModes count={5} />
        <button className={clsx(BOX, "gap-1 pr-0.5 pl-1.5")}>
          옵션
          <Icon name="down" className="size-3" />
        </button>
      </div>
      <div className="relative flex justify-between pt-[9px] pl-2">
        <div className="flex gap-[18px]">
          <Toolbar />
          <div className="text-white text-shadow-lg">
            <p className="leading-[17px] font-medium">사용자 원근법</p>
            <p className="leading-[18px]">(1) Collection | Cube</p>
          </div>
        </div>
        <div className="flex w-[104px] flex-col items-end pt-px">
          <div className="mr-[13px]">
            <NavGizmo />
          </div>
          <div className="mt-px mr-2 flex flex-col gap-[3px]">
            {["zoom", "hand", "camera", "persp"].map((n) => (
              <button key={n} aria-label={n} className="flex size-[27px] items-center justify-center rounded-full bg-[#232323] text-[#e6e6e6]">
                <Icon name={n} />
              </button>
            ))}
          </div>
        </div>
      </div>
      <div className="absolute top-[64px] right-0 flex h-4 w-2 items-center rounded-l bg-[#2a2a2a]">
        <Icon name="left" className="size-3" />
      </div>
    </section>
  );
}

/* ---------- node editor ---------- */

const SOCKET: Record<string, string> = {
  geometry: "rounded-full bg-[#00d6a3] border-[#161616]",
  string: "rounded-full bg-[#70b2ff] border-[#161616]",
  empty: "rounded-full bg-[#333] border-[#8a8a8a]",
};

function Socket({ kind, side }: { kind: string; side: "in" | "out" }) {
  const edge = side === "in" ? "-left-[6px]" : "-right-[6px]";
  if (kind === "bool" || kind === "float") {
    return (
      <svg viewBox="0 0 14 14" className="absolute -left-[7px] size-[14px]">
        <path d="m7 .7 6.300 6.300L7 13.300.7 7z" fill={kind === "bool" ? "#cca6d6" : "#a1a1a1"} stroke="#161616" />
        <circle cx="7" cy="7" r="1.700" fill="#161616" />
      </svg>
    );
  }
  return <span className={clsx("absolute size-3 border", edge, SOCKET[kind])}></span>;
}

function Row({ kind, side = "in", children }: { kind: string; side?: "in" | "out"; children?: ReactNode }) {
  return (
    <div className={clsx("relative flex h-[29px] items-center px-[14px]", side === "out" && "justify-end")}>
      <Socket kind={kind} side={side} />
      {children}
    </div>
  );
}

function Node({ title, dark, selected, className, children }: { title: string; dark?: boolean; selected?: boolean; className: string; children: ReactNode }) {
  return (
    <article
      className={clsx(
        "absolute rounded-md bg-[#303030] text-sm shadow-[0_2px_8px_rgba(0,0,0,.6)] outline",
        selected ? "outline-[#f2f2f2]" : "outline-[#141414]",
        className,
      )}
    >
      <h2 className={clsx("flex h-[27px] items-center gap-1 rounded-t-md border-b border-[#191919] pl-[11px]", dark ? "bg-[#1d1d1d]" : "bg-[#1d2446] pt-px text-[15px]")}>
        <Icon name="downBig" className="size-[19px]" />
        <span className="whitespace-nowrap">{title}</span>
      </h2>
      <div className="pt-1 pb-[6px]">{children}</div>
    </article>
  );
}

function NodeSelect({ label, value }: { label: string; value: string }) {
  return (
    <div className="mx-[13px] flex h-[27px] items-center rounded-[4px] border border-[#3d3d3d] bg-[#282828] pr-px">
      <select aria-label={label} className="min-w-0 flex-1 appearance-none bg-transparent pl-[9px] outline-none">
        <option>{value}</option>
      </select>
      <Icon name="down" className="size-4" />
    </div>
  );
}

function NameField({ id, className }: { id: string; className: string }) {
  return (
    <>
      <label htmlFor={id}>이름</label>
      <input
        id={id}
        defaultValue="test"
        className={clsx("-mr-px ml-auto h-[27px] rounded-[4px] border border-[#3d3d3d] bg-[#1d1d1d] px-[8px] text-[15px] outline-none", className)}
      />
    </>
  );
}

function NodeCanvas() {
  return (
    <div className="relative min-w-0 flex-1 overflow-hidden bg-[#1d1d1d]">
      <svg className="absolute inset-0 size-full" aria-hidden="true">
        <defs>
          <pattern id="dots" width="26.175" height="26.175" patternUnits="userSpaceOnUse" x="13" y="21">
            <rect width="3" height="3" fill="#272727" />
          </pattern>
        </defs>
        <rect width="100%" height="100%" fill="url(#dots)" />
        <g fill="none" stroke="#00d6a3" strokeWidth="2.500">
          <path d="M407 461C433 461 434 565 460 565" />
          <path d="M643 461C667 461 671 494 695 494" />
          <path d="M917 461h40" stroke="#a5ecd9" strokeWidth="3" />
        </g>
      </svg>
      <div className="relative flex h-11 items-center pl-[18px]">
        <Crumbs
          items={[
            { icon: "object", text: "Cube" },
            { icon: "geoNodes", text: "GeometryNodes" },
            { icon: "nodeTree", text: "Geometry Nodes" },
          ]}
        />
      </div>
      <div className="absolute top-[14px] left-0 flex h-4 w-2 items-center rounded-r bg-[#252525]">
        <Icon name="right" className="size-3" />
      </div>

      <Node title="그룹 입력" dark className="top-[415px] left-[224px] w-[183px]">
        <Row kind="geometry" side="out">지오메트리</Row>
        <Row kind="empty" side="out" />
      </Node>
      <Node title="Store Named Attrib…" className="top-[415px] left-[460px] w-[183px]">
        <Row kind="geometry" side="out">지오메트리</Row>
        <div className="flex flex-col gap-[6px] pt-[11px] pb-[5px]">
          <NodeSelect label="Data type" value="실수" />
          <NodeSelect label="Domain" value="포인트" />
        </div>
        <Row kind="geometry">지오메트리</Row>
        <Row kind="bool">선택</Row>
        <Row kind="string">
          <NameField id="store-name" className="w-[88px]" />
        </Row>
        <Row kind="float">
          <div className="-mx-px flex h-[26px] flex-1 items-center justify-between rounded-[4px] bg-[#545454] pr-[18px] pl-5">
            <label htmlFor="store-value">값</label>
            <input id="store-value" defaultValue="0.000" className="w-16 bg-transparent text-right text-[15px] outline-none" />
          </div>
        </Row>
      </Node>
      <Node title="Remove Named Attribute" className="top-[415px] left-[695px] w-[223px]">
        <Row kind="geometry" side="out">지오메트리</Row>
        <div className="pt-1">
          <Row kind="geometry">지오메트리</Row>
          <Row kind="string">
            <NameField id="remove-name" className="w-[112px]" />
          </Row>
        </div>
      </Node>
      <Node title="그룹 출력" dark selected className="top-[415px] left-[957px] w-[183px]">
        <Row kind="geometry">지오메트리</Row>
        <Row kind="empty" />
      </Node>

      <div className="absolute top-[10px] right-[2px] bottom-4 w-[3px] rounded bg-[#333]"></div>
      <div className="absolute right-3 bottom-1 left-[9px] h-[3px] rounded bg-[#333]"></div>
    </div>
  );
}

const SIDE_TABS = [
  { text: "노드", h: "h-[35px]" },
  { text: "도구", h: "h-[35px]", active: true },
  { text: "뷰", h: "h-[25px]" },
  { text: "그룹", h: "h-[35px]" },
];

function NodeEditor() {
  return (
    <section aria-label="Geometry node editor" className="flex min-h-0 flex-col overflow-hidden rounded-md bg-[#1d1d1d]">
      <div className="grid h-6 shrink-0 grid-cols-[1fr_auto_1fr] items-center bg-[#232323] pl-2">
        <div className="flex items-center gap-3">
          <MenuButton icon="geoNodes" label="Editor type" />
          <nav className="flex gap-[15px]">
            {["뷰", "선택", "추가", "노드"].map((m) => (
              <button key={m}>{m}</button>
            ))}
          </nav>
        </div>
        <div className="mr-8 flex items-center gap-2">
          <div className={clsx(BOX, "w-[211px]")}>
            <button aria-label="Browse node groups" className="flex w-[30px] items-center justify-center">
              <Icon name="nodeTree" className="size-[15px]" />
              <Icon name="down" className="size-3" />
            </button>
            <input aria-label="Node group" defaultValue="Geometry Nodes" className="h-full min-w-0 flex-1 border-l border-[#3d3d3d] bg-[#1d1d1d] pl-[7px] outline-none" />
            <div className="flex h-full gap-px">
              <Cell icon="shield" label="Fake user" className="bg-[#545454]" />
              <Cell icon="copy" label="Duplicate" className="bg-[#545454]" />
              <Cell icon="x" label="Unlink" className="bg-[#545454]" />
            </div>
          </div>
          <Icon name="pin" className="size-[15px]" />
        </div>
        <div className="flex justify-end gap-[5px] pr-[6px]">
          <div className={clsx(BOX, "w-5")}>
            <Cell icon="up" label="Parent tree" className="bg-[#303030]" />
          </div>
          <div className={clsx(BOX, "w-[52px]")}>
            <Cell icon="magnetFill" label="Snap" className="bg-[#4772b3] text-white" />
            <button aria-label="Snap target" className="flex flex-1 items-center justify-center">
              <Icon name="grid" className="size-[15px]" />
              <Icon name="down" className="size-3" />
            </button>
          </div>
          <ToggleMenu icon="overlay" label="Overlays" />
        </div>
      </div>
      <div className="flex min-h-0 flex-1">
        <NodeCanvas />
        <aside className="w-[199px] shrink-0 bg-[#303030] px-2 pt-0.5">
          <div className="h-[91px] rounded-[4px] bg-[#3d3d3d]">
            <h3 className="flex h-[26px] items-center gap-0.5 pl-[5px]">
              <Icon name="downBig" className="size-[15px]" />
              <span className="flex-1 font-medium">활성 도구</span>
              <Icon name="grip" className="mr-1 size-3" />
            </h3>
            <div className="flex h-[34px] items-center gap-[9px] pl-[15px]">
              <svg viewBox="2 1 20 22" className="size-[22px]">
                {TOOL_ART.select}
              </svg>
              <span>박스 선택</span>
            </div>
            <div className="pt-1 pl-[9px]">
              <SelectModes count={3} />
            </div>
          </div>
        </aside>
        <div className="flex w-5 shrink-0 flex-col gap-[5px] bg-[#181818] pt-[5px]">
          {SIDE_TABS.map((t) => (
            <button
              key={t.text}
              className={clsx(
                "flex w-4 items-center justify-center rounded-r-[4px] border border-l-0 border-[#3d3d3d] [writing-mode:vertical-rl] [text-orientation:sideways]",
                t.h,
                t.active ? "bg-[#303030]" : "bg-[#1d1d1d]",
              )}
            >
              {t.text}
            </button>
          ))}
        </div>
      </div>
    </section>
  );
}

/* ---------- outliner ---------- */

function OutlinerToggles({ check }: { check?: boolean }) {
  return (
    <div className="ml-auto flex items-center gap-[7px] pr-[14px] text-[#e6e6e6]">
      {check && (
        <label className="flex size-[11px] items-center justify-center rounded-[2px] bg-[#e6e6e6] text-[#222]">
          <input type="checkbox" defaultChecked aria-label="Include collection" className="sr-only" />
          <svg viewBox="0 0 10 10" className="size-[9px]">
            <path d="m1.500 5 2.500 3 5-6.500" fill="none" stroke="currentColor" strokeWidth="1.800" />
          </svg>
        </label>
      )}
      <button aria-label="Hide in viewport">
        <Icon name="eye" className="size-[13px]" />
      </button>
      <button aria-label="Disable in renders">
        <Icon name="photo" className="size-[13px]" />
      </button>
    </div>
  );
}

function Outliner() {
  return (
    <section aria-label="Outliner" className="flex min-h-0 flex-col overflow-hidden rounded-md bg-[#282828]">
      <div className="flex h-[25px] shrink-0 items-center gap-[5px] px-2">
        <MenuButton icon="outliner" label="Editor type" />
        <MenuButton icon="viewLayer" label="Display mode" />
        <SearchBox label="Search outliner" className="mr-[52px] ml-auto w-[111px]" />
        <MenuButton icon="filter" label="Filter" />
        <div className={clsx(BOX, "w-5")}>
          <Cell icon="newCollection" label="New collection" className="bg-[#454545]" />
        </div>
      </div>
      <div className="flex-1 bg-[repeating-linear-gradient(#282828_0_20px,#2b2b2b_20px_40px)] bg-position-[0_2px] pt-0.5">
        <div className="flex h-5 items-center pl-[22px]">
          <Icon name="collection" className="mr-2 size-[15px]" />씬 컬렉션
        </div>
        <div className="flex h-5 items-center pl-6">
          <Icon name="triDown" className="size-[10px]" />
          <span className="mr-[5px] ml-1.5 flex size-[18px] items-center justify-center rounded-[4px] border border-[#777] bg-[#545454]">
            <Icon name="collection" className="size-[14px]" />
          </span>
          Collection
          <OutlinerToggles check />
        </div>
        <ul className="relative">
          <li className="flex h-5 items-center pl-11">
            <Icon name="triRight" className="size-[10px]" />
            <Icon name="camera" className="mr-1.5 ml-2 size-4 text-[#bb7f51]" />
            <span className="w-[59px]">Camera</span>
            <span className="flex size-[19px] items-center justify-center rounded-[4px] border border-[#777] bg-[#545454]">
              <Icon name="cameraLine" className="size-[14px] text-[#00c895]" />
            </span>
            <OutlinerToggles />
          </li>
          <li className="flex h-5 items-center bg-[#334d80] pl-11">
            <Icon name="triRight" className="size-[10px]" />
            <span className="mr-1 ml-[6px] flex size-5 items-center justify-center rounded-[4px] border border-[#7185ab] bg-[#5a6b90]">
              <Icon name="meshFill" className="size-[14px] text-[#e1915a]" />
            </span>
            <span className="w-12 text-[#ffaf29]">Cube</span>
            <Icon name="wrenchLine" className="size-[14px] text-[#5b8bf0]" />
            <Icon name="mesh" className="ml-1.5 size-[14px] text-[#00c895]" />
            <OutlinerToggles />
          </li>
          <li className="flex h-5 items-center pl-11">
            <Icon name="triRight" className="size-[10px]" />
            <Icon name="light" className="mr-1.5 ml-2 size-4 text-[#bb7f51]" />
            <span className="w-[46px]">Light</span>
            <Icon name="lightData" className="size-4 text-[#00a37b]" />
            <OutlinerToggles />
          </li>
          <li aria-hidden="true" className="absolute top-1 bottom-1 left-[29px] w-px bg-[#666]"></li>
        </ul>
      </div>
    </section>
  );
}

/* ---------- properties ---------- */

const PROP_TABS = [
  [{ icon: "tool", color: "text-[#aaa]" }],
  [
    { icon: "render", color: "text-[#aaa]" },
    { icon: "output", color: "text-[#aaa]" },
    { icon: "viewLayer", color: "text-[#aaa]" },
    { icon: "scene", color: "text-[#aaa]" },
    { icon: "world", color: "text-[#b04f58]" },
  ],
  [{ icon: "collectionLine", color: "text-[#ddd]" }],
  [
    { icon: "object", color: "text-[#c07d44]" },
    { icon: "wrench", color: "text-[#6b98ff]", active: true },
    { icon: "particles", color: "text-[#5579c9]" },
    { icon: "physics", color: "text-[#5579c9]" },
    { icon: "constraints", color: "text-[#5579c9]" },
    { icon: "mesh", color: "text-[#00ab7f]" },
    { icon: "material", color: "text-[#b8545d]" },
  ],
  [{ icon: "texture", color: "text-[#b04f58]" }],
];

function Properties() {
  return (
    <section aria-label="Properties" className="flex min-h-0 flex-col overflow-hidden rounded-md bg-[#303030]">
      <div className="flex h-[25px] shrink-0 items-center justify-between px-2">
        <MenuButton icon="properties" label="Editor type" />
        <SearchBox label="Search properties" className="mr-[14px] w-[111px]" />
        <button aria-label="Options" className={clsx(BOX, "w-5 justify-center")}>
          <Icon name="down" className="size-3" />
        </button>
      </div>
      <div className="flex min-h-0 flex-1">
        <div className="flex w-7 shrink-0 flex-col gap-2 bg-[#1a1a1a] pt-2 pl-0.5">
          {PROP_TABS.map((g) => (
            <div key={g[0].icon} className="flex flex-col gap-0.5 py-px">
              {g.map((t) => (
                <button key={t.icon} aria-label={t.icon} className={clsx("flex h-[26px] w-full items-center justify-center rounded-l-[4px]", t.color, t.active && "bg-[#303030]")}>
                  <Icon name={t.icon} className="size-[15px]" />
                </button>
              ))}
            </div>
          ))}
        </div>
        <div className="min-w-0 flex-1 px-2">
          <div className="flex h-9 items-center justify-between px-[3px]">
            <Crumbs
              items={[
                { icon: "object", text: "Cube" },
                { icon: "geoNodes", text: "GeometryNodes" },
              ]}
            />
            <Icon name="pin" className="size-[15px]" />
          </div>
          <Dropdown label="Add modifier" value="모디파이어를 추가" className="mt-2" />
          <div className="mt-[11px] h-[111px] rounded-[4px] border border-[#4772b3] bg-[#3d3d3d]">
            <div className="flex h-[25px] items-center pl-1">
              <Icon name="downBig" className="size-[15px]" />
              <Icon name="geoNodes" className="ml-0.5 size-[15px]" />
              <div className={clsx(BOX, "ml-3 w-[188px] gap-px border-0")}>
                <input aria-label="Modifier name" defaultValue="GeometryNo…" className="h-full min-w-0 flex-1 bg-[#1d1d1d] pl-[7px] outline-none" />
                <Cell icon="mesh" label="On cage" className="bg-[#545454]" />
                <Cell icon="editMode" label="Edit mode" className="bg-[#4772b3] text-white" />
                <Cell icon="monitor" label="Realtime" className="bg-[#4772b3] text-white" />
                <Cell icon="photo" label="Render" className="bg-[#4772b3] text-white" />
                <Cell icon="down" label="Options" />
              </div>
              <button aria-label="Remove modifier" className="ml-1">
                <Icon name="x" className="size-[15px]" />
              </button>
              <Icon name="grip" className="mr-[5px] ml-auto size-3" />
            </div>
            <div className="flex h-[35px] items-center px-2">
              <div className={clsx(BOX, "flex-1 gap-px border-0")}>
                <button aria-label="Browse node groups" className="flex w-[30px] items-center justify-center">
                  <Icon name="nodeTree" className="size-[15px]" />
                  <Icon name="down" className="size-3" />
                </button>
                <input aria-label="Node group" defaultValue="Geometry Nodes" className="h-full min-w-0 flex-1 bg-[#1d1d1d] pl-[7px] outline-none" />
                <Cell icon="shield" label="Fake user" className="bg-[#545454]" />
                <Cell icon="copy" label="Duplicate" className="bg-[#545454]" />
                <Cell icon="x" label="Unlink" className="bg-[#545454]" />
              </div>
            </div>
            {["Output Attributes", "Internal Dependencies"].map((t) => (
              <button key={t} className="flex h-[25px] w-full items-center gap-px pl-[19px]">
                <Icon name="right" className="size-[15px]" />
                {t}
              </button>
            ))}
          </div>
        </div>
      </div>
    </section>
  );
}

export default function App() {
  return (
    <div className="flex h-screen min-h-[1200px] min-w-[1500px] flex-col border border-[#6a6a6a] bg-[#161616] font-['DejaVu_Sans_Condensed','DejaVu_Sans','Noto_Sans_CJK_KR',sans-serif] text-[11px] leading-4 text-[#e0e0e0]">
      <TitleBar />
      <TopBar />
      <main className="grid min-h-0 flex-1 grid-cols-[1583fr_332fr] gap-[3px]">
        <div className="grid min-h-0 grid-rows-[916fr_1114fr] gap-[3px]">
          <div className="grid min-h-0 grid-cols-[683fr_897fr] gap-[3px]">
            <Spreadsheet />
            <Viewport />
          </div>
          <NodeEditor />
        </div>
        <div className="grid min-h-0 grid-rows-[652fr_1378fr] gap-[3px]">
          <Outliner />
          <Properties />
        </div>
      </main>
      <footer className="flex h-5 shrink-0 items-center bg-[#1a1a1a] pr-[13px] pl-[10px] text-[#999]">
        {["mouseL", "mouseM", "mouseR"].map((m) => (
          <span key={m} className="w-[211px]">
            <Icon name={m} />
          </span>
        ))}
        <span className="ml-auto">3.6.5</span>
      </footer>
    </div>
  );
}
